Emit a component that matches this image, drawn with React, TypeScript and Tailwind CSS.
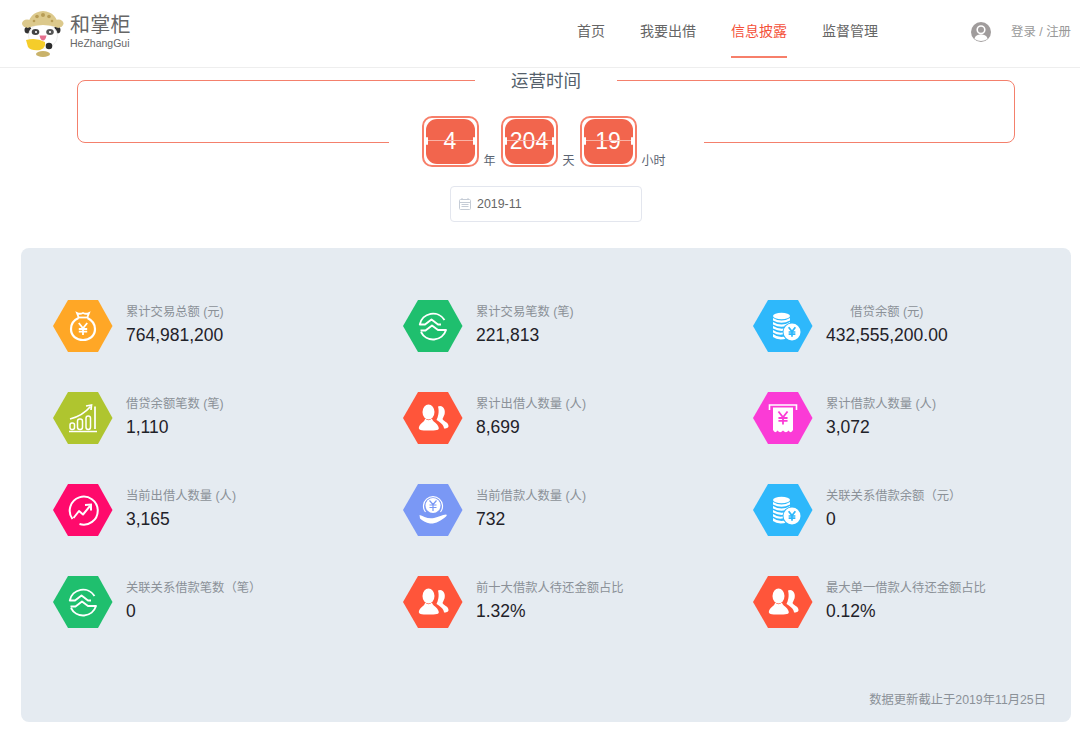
import type { ReactNode } from 'react';

const FONT = '[font-family:"Liberation_Sans","Noto_Sans_CJK_SC",sans-serif]';

const Logo = () => (
  <svg width="46" height="50" viewBox="20 8 46 50" className="shrink-0">
    <ellipse cx="43" cy="53" rx="7" ry="3" fill="#c9b26a" />
    <circle cx="28" cy="29" r="3.5" fill="#333" />
    <circle cx="57" cy="29" r="3.5" fill="#333" />
    <ellipse cx="43" cy="35" rx="14.5" ry="12.5" fill="#fff" stroke="#eeeeee" />
    <ellipse cx="27" cy="22.5" rx="5" ry="4" fill="#dcc98c" />
    <ellipse cx="58.5" cy="22.5" rx="5" ry="4" fill="#dcc98c" />
    <path d="M27 27 Q29 11 43 10 Q57 11 59 27 Q43 21 27 27Z" fill="#dcc98c" />
    <circle cx="37" cy="15.5" r="1.8" fill="#b79c55" />
    <circle cx="43" cy="14" r="2" fill="#b79c55" />
    <circle cx="49" cy="15.5" r="1.8" fill="#b79c55" />
    <circle cx="34" cy="20" r="1.3" fill="#b79c55" />
    <circle cx="52" cy="20" r="1.3" fill="#b79c55" />
    <ellipse cx="35.5" cy="31" rx="3.8" ry="3" fill="#444" />
    <ellipse cx="50" cy="31" rx="3.8" ry="3" fill="#555" />
    <circle cx="36" cy="31" r="1.1" fill="#fff" />
    <circle cx="50" cy="31" r="1.1" fill="#fff" />
    <path d="M39.5 34.5 h7 q-1 5 -3.5 5 q-2.5 0 -3.5 -5z" fill="#e6708f" />
    <path d="M26 39 Q36 36 45 41 Q46 47 40 49 Q31 50 28 46 Z" fill="#f5cd2a" />
    <circle cx="49" cy="45" r="3.3" fill="#2c2c2c" />
  </svg>
);

const Yuan = ({ x, y, s, color = '#fff', w = 1.5 }: { x: number; y: number; s: number; color?: string; w?: number }) => (
  <path
    d={`M${x - s * 0.7} ${y - s} L${x} ${y - s * 0.1} L${x + s * 0.7} ${y - s} M${x} ${y - s * 0.1} V${y + s} M${x - s * 0.7} ${y} H${x + s * 0.7} M${x - s * 0.7} ${y + s * 0.45} H${x + s * 0.7}`}
    fill="none"
    stroke={color}
    strokeWidth={w}
  />
);

const Bag = () => (
  <g fill="none" stroke="#fff" strokeWidth="1.8">
    <path d="M25.5 17 L24 13 Q27 14.5 30 13 Q33 14.5 36 13 L34.5 17" />
    <path d="M25 17.5 H35" />
    <path d="M25.5 18 C20 20.5 18 25 18 29 C18 36 23.5 40 30 40 C36.5 40 42 36 42 29 C42 25 39.5 20.5 34.5 18" strokeWidth="2.2" />
    <Yuan x={30} y={29} s={6} w={1.8} />
  </g>
);

const Swap = () => (
  <g fill="none" stroke="#fff" strokeWidth="1.9" strokeLinejoin="round">
    <path d="M41.5 20 A13.5 13.5 0 0 0 16.8 24.5 H22 L28.5 19.5 L35 24.5 H38" />
    <path d="M17.5 30.5 H22.5 L29 25.5 L35 30 H43 A13.5 13.5 0 0 1 18 32" />
  </g>
);

const Coins = () => (
  <g>
    <g fill="#fff">
      <ellipse cx="28.5" cy="16" rx="8.5" ry="3.2" />
      <path d="M20 18 Q28.5 23 37 18 V20.5 Q28.5 25 20 20.5Z" />
      <path d="M20 22 Q28.5 27 37 22 V24.5 Q28.5 29 20 24.5Z" />
      <path d="M20 26 Q28.5 31 35 27 V29 Q28.5 33 20 28.5Z" />
      <path d="M20 30 Q26 34 31 32 V34 Q26 36 20 32.5Z" />
      <path d="M20 34 Q25 38 32 36.5 L34 38.5 Q25 41 20 37Z" />
    </g>
    <circle cx="39" cy="32" r="9.5" fill="#2eb8fb" />
    <circle cx="39" cy="32" r="8.5" fill="#fff" />
    <Yuan x={39} y={32} s={4.8} color="#2eb8fb" w={1.7} />
  </g>
);

const Growth = () => (
  <g fill="none" stroke="#fff">
    <path d="M16 39.5 H44" strokeWidth="1.5" />
    <rect x="17" y="31" width="4.5" height="6.5" rx="2" strokeWidth="1.5" />
    <rect x="24.5" y="27" width="5" height="10.5" rx="2.2" strokeWidth="1.5" />
    <rect x="33" y="24" width="4.5" height="13.5" rx="2.2" strokeWidth="1.5" />
    <path d="M42 14.5 V37" strokeWidth="1.7" />
    <path d="M17 27 C25 25 32 21 37.5 14.5" strokeWidth="1.7" />
    <path d="M33 14 L38.5 13 L38 18" strokeWidth="1.7" />
  </g>
);

const People = () => (
  <g fill="#fff">
    <path d="M37 14 C41.5 14.5 42.5 19 41.5 22.5 C40.5 25 40 26 39.5 27 C41 30 45.5 30 45.5 34 C45.5 36 43 36.5 41 36.5 C41 33 37 30 33.5 28 C35 25 36.5 20 35 14.5 Z" />
    <ellipse cx="25.5" cy="20" rx="6" ry="7.5" />
    <path d="M22 26.5 C22 30 17 31 16 35 C15 38 18 38.5 25.5 38.5 C33 38.5 37 38.5 35.5 35 C34.5 31 29.5 30 29 26.5 Q25.5 30 22 26.5Z" />
  </g>
);

const Receipt = () => (
  <g>
    <path d="M16.5 18 V13 H43.5 V18" fill="none" stroke="#fff" strokeWidth="1.6" />
    <path d="M20 15.5 H40 V38 Q38 42 35.5 38.5 Q33 42 30 38.5 Q27 42 24.5 38.5 Q22 42 20 38 Z" fill="#fff" />
    <Yuan x={30} y={26} s={6.5} color="#fb3bd6" w={1.8} />
  </g>
);

const Trend = () => (
  <g fill="none" stroke="#fff" strokeWidth="2">
    <path d="M19.5 35 A14 14 0 1 1 26.5 40" />
    <path d="M20.5 34 L26 27 L30 30.5 L37 22" strokeLinejoin="round" />
    <path d="M32 21 L38 20.5 L38 26.5" />
  </g>
);

const HandCoin = () => (
  <g>
    <path d="M22.5 28 A9.5 9.5 0 1 1 37.5 28" fill="none" stroke="#fff" strokeWidth="1.2" />
    <circle cx="30" cy="21.5" r="7.5" fill="#fff" />
    <path d="M26.5 16.5 L30 20.5 L33.5 16.5 M30 20.5 V27 M26.5 21 H33.5 M26.5 23.5 H33.5" fill="none" stroke="#7a98f5" strokeWidth="1.2" />
    <path d="M16.5 31 C20 32 25 35.5 31 34 C36 33 39 31 43 30.5 C44 30.5 44 31.5 43 32.5 C38 37 32 40 27 39.5 C23 39 19 36.5 17 34.5 Z" fill="#fff" />
  </g>
);

const Hex = ({ color, children }: { color: string; children: ReactNode }) => (
  <svg width="60" height="52" viewBox="0 0 60 52" className="shrink-0">
    <polygon points="0,26 15,0 45,0 59.5,26 45,52 15,52" fill={color} />
    {children}
  </svg>
);

const stats = [
  { color: '#ffa726', icon: <Bag />, label: '累计交易总额 (元)', value: '764,981,200' },
  { color: '#1fbf6e', icon: <Swap />, label: '累计交易笔数 (笔)', value: '221,813' },
  { color: '#2eb8fb', icon: <Coins />, label: '借贷余额 (元)', value: '432,555,200.00', center: true },
  { color: '#afc52f', icon: <Growth />, label: '借贷余额笔数 (笔)', value: '1,110' },
  { color: '#ff553a', icon: <People />, label: '累计出借人数量 (人)', value: '8,699' },
  { color: '#fb3bd6', icon: <Receipt />, label: '累计借款人数量 (人)', value: '3,072' },
  { color: '#ff0a6c', icon: <Trend />, label: '当前出借人数量 (人)', value: '3,165' },
  { color: '#7a98f5', icon: <HandCoin />, label: '当前借款人数量 (人)', value: '732' },
  { color: '#2eb8fb', icon: <Coins />, label: '关联关系借款余额（元）', value: '0' },
  { color: '#1fbf6e', icon: <Swap />, label: '关联关系借款笔数（笔）', value: '0' },
  { color: '#ff553a', icon: <People />, label: '前十大借款人待还金额占比', value: '1.32%' },
  { color: '#ff553a', icon: <People />, label: '最大单一借款人待还金额占比', value: '0.12%' },
];

const FlipCard = ({ value }: { value: string }) => (
  <div className="w-[57px] h-[51px] border-2 border-[#f77f6a] rounded-[10px] bg-white flex items-center justify-center relative">
    <div className="w-[49px] h-[45px] rounded-[11px] bg-[#f2654d] flex items-center justify-center text-white text-[23px] leading-none">
      {value}
    </div>
    <div className="absolute left-[2px] right-[2px] top-[22px] h-px bg-[#f9b3a6]" />
    <div className="absolute left-[2px] top-[19px] w-[2px] h-[8px] bg-white rounded-sm" />
    <div className="absolute right-[2px] top-[19px] w-[2px] h-[8px] bg-white rounded-sm" />
  </div>
);

const Unit = ({ children }: { children: ReactNode }) => (
  <span className="self-end text-[12px] leading-none text-[#5b6472] mb-[1px] ml-[5px]">{children}</span>
);

export default function App() {
  return (
    <div className={`${FONT} w-[1080px] h-[730px] bg-white overflow-hidden`}>
      <header className="h-[68px] border-b border-[#eeeeee] flex items-center pl-[20px] pr-[9px]">
        <Logo />
        <div className="ml-[4px] mt-[-3px]">
          <div className="text-[20px] leading-[23px] text-[#666] tracking-[0.3px]">和掌柜</div>
          <div className="text-[10.5px] leading-[13px] text-[#666]">HeZhangGui</div>
        </div>
        <nav className="ml-auto flex gap-[35px] h-full text-[14px] text-[#666]">
          <a className="h-[58px] pt-[21px] leading-[20px]">首页</a>
          <a className="h-[58px] pt-[21px] leading-[20px]">我要出借</a>
          <a className="h-[58px] pt-[21px] leading-[20px] text-[#f4513a] border-b-2 border-[#f77f6a]">信息披露</a>
          <a className="h-[58px] pt-[21px] leading-[20px]">监督管理</a>
        </nav>
        <svg width="20" height="20" viewBox="0 0 20 20" className="ml-[93px] mt-[-4px]">
          <circle cx="10" cy="10" r="10" fill="#a09c9c" />
          <circle cx="10" cy="7.8" r="3.8" fill="none" stroke="#fff" strokeWidth="1.6" />
          <path d="M3.5 17 C4 13.5 7 12.5 10 12.5 C13 12.5 16 13.5 16.5 17 Q10 21 3.5 17Z" fill="#fff" />
        </svg>
        <div className="ml-[20px] mt-[-2px] text-[12.4px] text-[#999] whitespace-nowrap">登录 / 注册</div>
      </header>

      <section className="mt-[12px] mx-[77px] w-[938px] h-[63px] border border-[#f4806c] rounded-[8px] flex flex-col items-center justify-between">
        <h2 className="-mt-[12px] w-[142px] h-[24px] bg-white text-center text-[17.5px] leading-[24px] font-normal text-[#555f6b]">
          运营时间
        </h2>
        <div className="-mb-[26px] w-[315px] h-[52px] bg-white flex pl-[33px]">
          <FlipCard value="4" />
          <Unit>年</Unit>
          <div className="w-[5px]" />
          <FlipCard value="204" />
          <Unit>天</Unit>
          <div className="w-[5px]" />
          <FlipCard value="19" />
          <Unit>小时</Unit>
        </div>
      </section>

      <div className="mt-[43px] ml-[450px] w-[192px] h-[36px] border border-[#e3e6ee] rounded-[4px] flex items-center pl-[8px] text-[12.4px] text-[#666]">
        <svg width="12" height="12" viewBox="0 0 12 12" fill="none" stroke="#c5ccd6" strokeWidth="1" className="mr-[6px]">
          <rect x="0.5" y="1.5" width="11" height="10" rx="1" />
          <path d="M0.5 4.5 H11.5 M2.5 6.5 H9.5 M2.5 8.5 H9.5 M3 0 V2 M9 0 V2" />
        </svg>
        2019-11
      </div>

      <main className="mt-[26px] ml-[21px] w-[1050px] h-[474px] bg-[#e5ebf1] rounded-[8px] pt-[52px] pl-[32px] flex flex-col">
        <div className="grid grid-cols-[350px_350px_318px] gap-y-[40px]">
          {stats.map(s => (
            <div key={s.label} className="flex items-center h-[52px]">
              <Hex color={s.color}>{s.icon}</Hex>
              <div className={`ml-[13px] w-max pb-[3px] ${s.center ? 'text-center' : ''}`}>
                <div className="text-[12.3px] leading-[16px] text-[#8b9198] whitespace-nowrap">{s.label}</div>
                <div className="text-[17.5px] leading-[22px] mt-[4px] text-[#1f2229] whitespace-nowrap">{s.value}</div>
              </div>
            </div>
          ))}
        </div>
        <div className="mt-auto mb-[14px] mr-[25px] text-right text-[12.3px] leading-[16px] text-[#8b9198]">
          数据更新截止于2019年11月25日
        </div>
      </main>
    </div>
  );
}
